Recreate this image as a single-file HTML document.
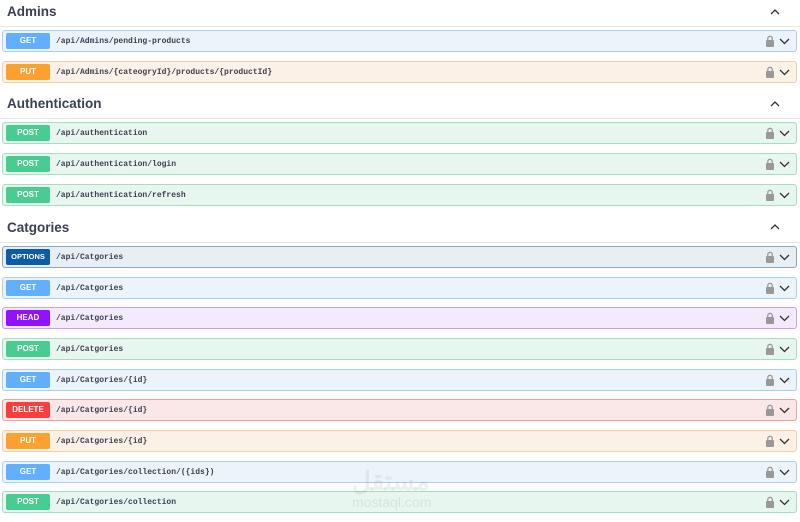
<!DOCTYPE html>
<html><head><meta charset="utf-8"><style>
body{margin:0;width:800px;height:522px;background:#fff;font-family:"Liberation Sans",sans-serif;position:relative;overflow:hidden}
.h{position:absolute;left:7px;font-size:13.5px;font-weight:bold;color:#3b4151}
.hl{position:absolute;left:0;width:800px;height:1px;background:#e6e7e9}
.up{position:absolute;left:770px;width:10px;height:10px}
.r{position:absolute;left:2px;width:793px;height:20px;border:1px solid;border-radius:3px}
.b{position:absolute;left:3px;top:2px;width:44px;height:16px;border-radius:2px;color:#fff;font-size:8px;font-weight:bold;text-align:center;line-height:16px}
.p{position:absolute;left:53px;top:1px;line-height:20px;font-family:"Liberation Mono",monospace;font-size:8px;font-weight:bold;color:#3b4151}
.ic{position:absolute;right:6px;top:4px}
.get{background:#ebf3fb;border-color:#a9cff5}.get .b{background:#61affe}
.put{background:#fbf1e6;border-color:#f4cf9f}.put .b{background:#fca130}
.post{background:#e8f6f0;border-color:#a2e0c2}.post .b{background:#49cc90}
.opt{background:#e7eef4;border-color:#8aa7c6}.opt .b{background:#0d5aa7;font-size:7.5px}
.head{background:#f3eafc;border-color:#cd9cf5}.head .b{background:#9012fe}
.del{background:#fae7e7;border-color:#f2a0a0}.del .b{background:#f93e3e}
.wm{position:absolute;left:352px;top:466px;font-size:26px;font-weight:bold;color:rgba(120,120,120,.12)}
.wm2{position:absolute;left:352px;top:494px;font-size:14px;color:rgba(120,120,120,.15)}
</style></head><body>
<svg width="0" height="0" style="position:absolute"><defs>
<g id="ic"><rect x="0" y="5" width="8" height="7" rx="1" fill="#999"/><path d="M1.8 5.5V3.5a2.2 2.2 0 0 1 4.4 0V5.5" fill="none" stroke="#999" stroke-width="1.3"/><path d="M14 4l4.5 4.5L23 4" fill="none" stroke="#333" stroke-width="1.3"/></g>
</defs></svg>
<div class="h" style="top:4px">Admins</div><div class="hl" style="top:26px"></div>
<svg class="up" style="top:7px" viewBox="0 0 10 10"><path d="M1 7l4-4 4 4" fill="none" stroke="#333" stroke-width="1.3"/></svg>
<div class="h" style="top:96px">Authentication</div><div class="hl" style="top:118px"></div>
<svg class="up" style="top:99px" viewBox="0 0 10 10"><path d="M1 7l4-4 4 4" fill="none" stroke="#333" stroke-width="1.3"/></svg>
<div class="h" style="top:220px">Catgories</div><div class="hl" style="top:242px"></div>
<svg class="up" style="top:222px" viewBox="0 0 10 10"><path d="M1 7l4-4 4 4" fill="none" stroke="#333" stroke-width="1.3"/></svg>

<div class="r get" style="top:30px"><div class="b">GET</div><div class="p">/api/Admins/pending-products</div><svg class="ic" width="24" height="12"><use href="#ic"/></svg></div>
<div class="r put" style="top:61px"><div class="b">PUT</div><div class="p">/api/Admins/{cateogryId}/products/{productId}</div><svg class="ic" width="24" height="12"><use href="#ic"/></svg></div>

<div class="r post" style="top:122px"><div class="b">POST</div><div class="p">/api/authentication</div><svg class="ic" width="24" height="12"><use href="#ic"/></svg></div>
<div class="r post" style="top:153px"><div class="b">POST</div><div class="p">/api/authentication/login</div><svg class="ic" width="24" height="12"><use href="#ic"/></svg></div>
<div class="r post" style="top:184px"><div class="b">POST</div><div class="p">/api/authentication/refresh</div><svg class="ic" width="24" height="12"><use href="#ic"/></svg></div>

<div class="r opt" style="top:246px"><div class="b">OPTIONS</div><div class="p">/api/Catgories</div><svg class="ic" width="24" height="12"><use href="#ic"/></svg></div>
<div class="r get" style="top:277px"><div class="b">GET</div><div class="p">/api/Catgories</div><svg class="ic" width="24" height="12"><use href="#ic"/></svg></div>
<div class="r head" style="top:307px"><div class="b">HEAD</div><div class="p">/api/Catgories</div><svg class="ic" width="24" height="12"><use href="#ic"/></svg></div>
<div class="r post" style="top:338px"><div class="b">POST</div><div class="p">/api/Catgories</div><svg class="ic" width="24" height="12"><use href="#ic"/></svg></div>
<div class="r get" style="top:369px"><div class="b">GET</div><div class="p">/api/Catgories/{id}</div><svg class="ic" width="24" height="12"><use href="#ic"/></svg></div>
<div class="r del" style="top:399px"><div class="b">DELETE</div><div class="p">/api/Catgories/{id}</div><svg class="ic" width="24" height="12"><use href="#ic"/></svg></div>
<div class="r put" style="top:430px"><div class="b">PUT</div><div class="p">/api/Catgories/{id}</div><svg class="ic" width="24" height="12"><use href="#ic"/></svg></div>
<div class="r get" style="top:461px"><div class="b">GET</div><div class="p">/api/Catgories/collection/({ids})</div><svg class="ic" width="24" height="12"><use href="#ic"/></svg></div>
<div class="r post" style="top:491px"><div class="b">POST</div><div class="p">/api/Catgories/collection</div><svg class="ic" width="24" height="12"><use href="#ic"/></svg></div>
<div class="wm" style="font-family:'Liberation Sans','Noto Sans CJK SC',sans-serif">مستقل</div>
<div class="wm2">mostaql.com</div>
</body></html>
